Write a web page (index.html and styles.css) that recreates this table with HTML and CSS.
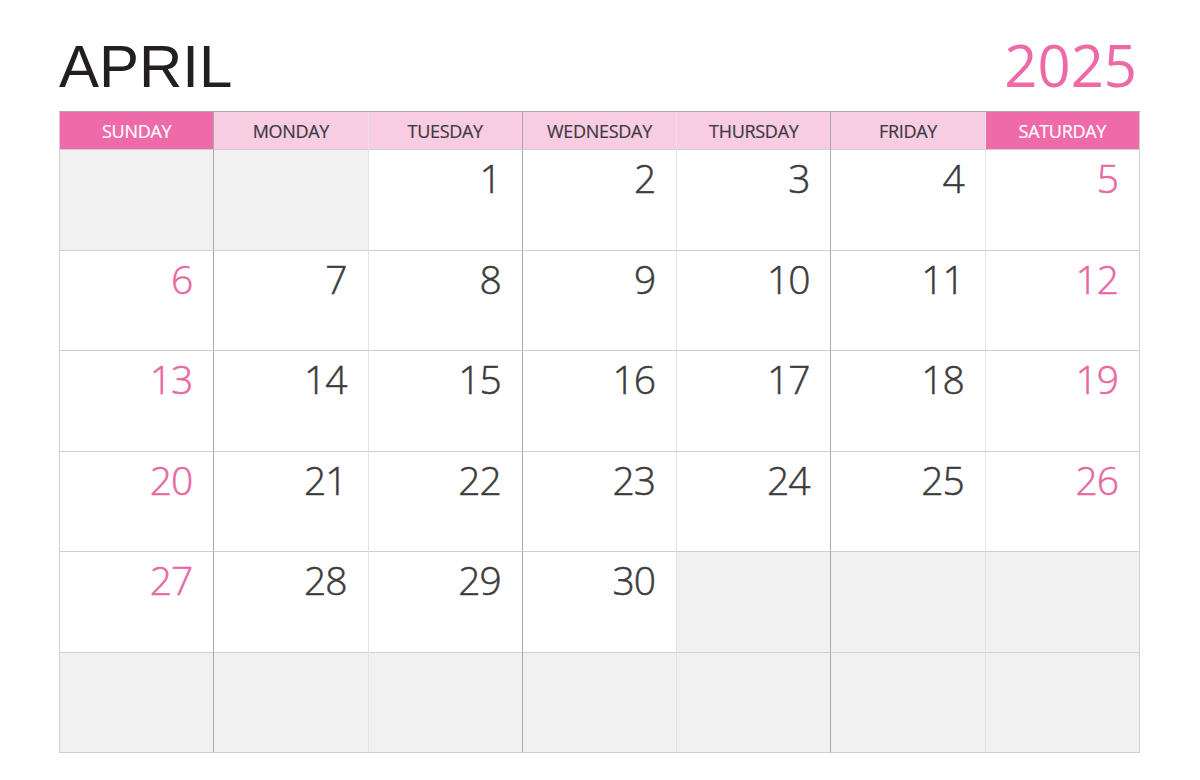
FILE: index.html
```html
<!DOCTYPE html>
<html>
<head>
<meta charset="utf-8">
<link rel="stylesheet" href="styles.css">
</head>
<body>
<div class="page">
  <div class="title">
    <div class="month">APRIL</div>
    <div class="year">2025</div>
  </div>
  <div class="cal">
    <div class="hd pink c0">SUNDAY</div>
    <div class="hd light c1">MONDAY</div>
    <div class="hd light c2">TUESDAY</div>
    <div class="hd light c3">WEDNESDAY</div>
    <div class="hd light c4">THURSDAY</div>
    <div class="hd light c5">FRIDAY</div>
    <div class="hd pink c6">SATURDAY</div>

    <div class="d c0 off"></div>
    <div class="d c1 off"></div>
    <div class="d c2">1</div>
    <div class="d c3">2</div>
    <div class="d c4">3</div>
    <div class="d c5">4</div>
    <div class="d c6 we">5</div>

    <div class="d c0 we">6</div>
    <div class="d c1">7</div>
    <div class="d c2">8</div>
    <div class="d c3">9</div>
    <div class="d c4">10</div>
    <div class="d c5">11</div>
    <div class="d c6 we">12</div>

    <div class="d c0 we">13</div>
    <div class="d c1">14</div>
    <div class="d c2">15</div>
    <div class="d c3">16</div>
    <div class="d c4">17</div>
    <div class="d c5">18</div>
    <div class="d c6 we">19</div>

    <div class="d c0 we">20</div>
    <div class="d c1">21</div>
    <div class="d c2">22</div>
    <div class="d c3">23</div>
    <div class="d c4">24</div>
    <div class="d c5">25</div>
    <div class="d c6 we">26</div>

    <div class="d c0 we">27</div>
    <div class="d c1">28</div>
    <div class="d c2">29</div>
    <div class="d c3">30</div>
    <div class="d c4 off"></div>
    <div class="d c5 off"></div>
    <div class="d c6 off"></div>

    <div class="d c0 off"></div>
    <div class="d c1 off"></div>
    <div class="d c2 off"></div>
    <div class="d c3 off"></div>
    <div class="d c4 off"></div>
    <div class="d c5 off"></div>
    <div class="d c6 off"></div>
  </div>
</div>
</body>
</html>
```

FILE: styles.css
```css
html, body {
  margin: 0;
  padding: 0;
  background: #ffffff;
}

.page {
  width: 1081px;
  margin-left: 59px;
  padding-top: 36px;
}

.title {
  display: flex;
  justify-content: space-between;
  align-items: baseline;
  height: 75px;
}

.month {
  font-family: "Liberation Sans", Arial, sans-serif;
  font-size: 60px;
  line-height: 1;
  color: #231f20;
}

.year {
  font-family: "Open Sans", sans-serif;
  font-size: 58px;
  line-height: 1;
  color: #ee6aa7;
  margin-right: 3px;
}

.cal {
  display: grid;
  grid-template-columns: repeat(7, 1fr);
  grid-template-rows: 38px repeat(6, 100.5px);
  border-top: 1px solid #a9a9a9;
  border-left: 1px solid #d0d0d0;
}

.cal > div {
  box-sizing: border-box;
  border-right: 1px solid #e4e4e4;
  border-bottom: 1px solid #cfcfcf;
}

.cal > .c0, .cal > .c2, .cal > .c4 {
  border-right-color: #a9a9a9;
}

.cal > .c6 {
  border-right-color: #d0d0d0;
}

.hd {
  font-family: "Open Sans", sans-serif;
  font-size: 18px;
  letter-spacing: -0.3px;
  display: flex;
  align-items: center;
  justify-content: center;
  color: #3d3a40;
  -webkit-text-stroke: 0.2px currentColor;
}

.hd.pink {
  background: #ef6aa8;
  color: #ffffff;
}

.hd.light {
  background: #f8cde1;
}

.d {
  font-family: "Open Sans", sans-serif;
  font-size: 39px;
  font-weight: 300;
  letter-spacing: -1px;
  line-height: 1;
  text-align: right;
  padding: 8px 21px 0 0;
  color: #3c3c3c;
  background: #ffffff;
  -webkit-text-stroke: 0.5px currentColor;
}

.d.we {
  color: #e868a3;
}

.d.off {
  background: #f1f1f1;
}
```
